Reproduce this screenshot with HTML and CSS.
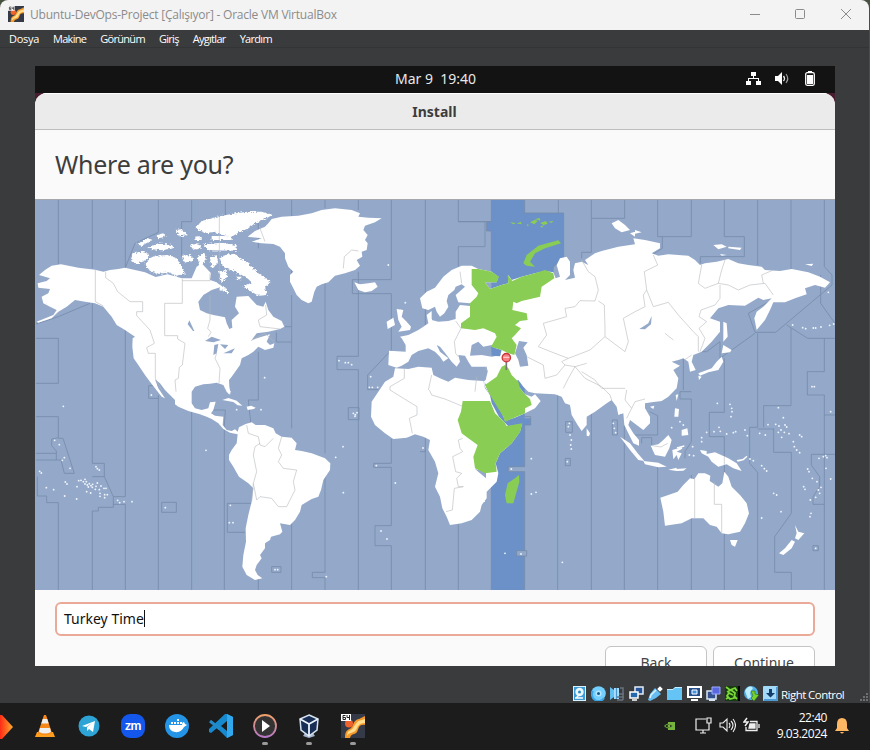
FILE: index.html
```html
<!DOCTYPE html>
<html lang="tr">
<head>
<meta charset="utf-8">
<title>Ubuntu-DevOps-Project</title>
<link rel="stylesheet" href="styles.css">
</head>
<body>
<svg width="0" height="0" class="defs" aria-hidden="true">
  <defs>
    <symbol id="vm" viewBox="0 0 24 24"><path fill="#343a47" d="M0 0h24v24H0z"/><path fill="#f59a2a" d="M4 24c0-8 3-8 6-10 3-3 2-8 8-9l6-3v9c-7-1-6 4-8 7-2 3-6 1-7 6z"/><path fill="#ffdc8e" d="M6 22c0-6 4-5 6-8 3-4 3-7 9-8l3-1v4c-7 0-7 4-9 7-2 3-7 2-9 6z"/><circle cx="8" cy="9.500" r="4" fill="#f0642b"/><path fill="#fff" d="M0 0h10v7H0z"/><path d="M4.500 1.500H2v4h2.500v-2H2M6 1v2.500h2.500M8.500 1v5" stroke="#222" fill="none"/></symbol>
  </defs>
</svg>
<div class="window">
  <header class="titlebar">
    <svg class="app-icon"><use href="#vm"/></svg>
    <span class="title">Ubuntu-DevOps-Project [Çalışıyor] - Oracle VM VirtualBox</span>
    <svg class="controls" viewBox="0 0 104 12" fill="none" stroke="#8b8b8b"><path d="M0 6.500h10"/><rect x="45.500" y="1.500" width="9" height="9" rx="1"/><path d="M91 1l10 10M101 1L91 11"/></svg>
  </header>
  <nav class="menubar"><span>Dosya</span><span>Makine</span><span>Görünüm</span><span>Giriş</span><span>Aygıtlar</span><span>Yardım</span></nav>
  <main class="screen">
    <div class="topbar">
      <span class="clock">Mar 9&nbsp; 19:40</span>
      <svg class="sys" viewBox="0 0 72 16" fill="#fff">
        <path d="M5 1h5v4H5zM0 10h5v4H0zM10 10h5v4h-5zM7 5h1v2h5v3h-1V8H3v2H2V7h5z"/>
        <path d="M29 5h3l4-4v13l-4-4h-3z"/><path d="M37.500 5q2 2.500 0 5" fill="none" stroke="#eee" stroke-width="1.300"/><path d="M40 3q3.500 4.500 0 9" fill="none" stroke="#999" stroke-width="1.200"/>
        <path d="M62 0h4v1h-4z"/><rect x="59.700" y="1.700" width="8.600" height="12.600" rx="1.500" fill="none" stroke="#fff" stroke-width="1.300"/><path d="M61 4h6v9h-6z"/>
      </svg>
    </div>
    <div class="backdrop"><section class="installer">
      <div class="install-head"><span>Install</span></div>
      <h1><span>Where are you?</span></h1>
      <svg class="map" viewBox="0 12 2400 1173">
        <defs><filter id="coast" x="0" y="0" width="100%" height="100%"><feTurbulence type="fractalNoise" baseFrequency=".13" numOctaves="2" seed="4"/><feDisplacementMap in="SourceGraphic" scale="4" xChannelSelector="R" yChannelSelector="G"/></filter>
        <filter id="fjord" x="0" y="0" width="100%" height="100%"><feTurbulence type="fractalNoise" baseFrequency=".12 .25" numOctaves="2" seed="9"/><feDisplacementMap in="SourceGraphic" scale="13" xChannelSelector="R" yChannelSelector="G"/></filter></defs>
        <path class="sea" d="M0 12h2400v1173H0z"/>
        <path class="band" d="M1369 12h100v42h117v136l-30 25v40l-87 90v325h18v20h-18v125h-49v15h49v237h-24v16h24v102h-100V108h-14V80h14z"/>
        <g class="zones">
          <path d="M70 12V208M0 430H70V565H0M0 665H70V728L50 732V752L64 768V775H0M64 775V795H0M64 795H78L88 835H118L84 730H70M7 845V903H35V923H70V1185"/>
          <path d="M172 12V220M172 325V805H208V845L235 905V937H190V948H172V1185M172 845H208M235 905H271V12M235 928H271V1185M271 218L300 145L370 112V12M0 388L70 365L165 325"/>
          <path d="M370 610H341V572H370M370 600V1185M380 922H424V952H380zM470 12V80H440V185M470 630V1185M571 12V85M528 645H571L568 690V1185M577 925H650M577 925V1012H630M670 60V160M670 470V615H640L648 690M670 1150V1185"/>
          <path d="M770 12V65M770 150V265M770 300V700M770 395H750M724 412V441H770M770 985V1185M870 12V40M870 262V775M870 830V1132H832V1148H870V1185M970 12V45M970 230V484H906V524H970V1185M1069 12V254H952V296H1069V465L998 540V584H1030M1069 732V805H1016V817H1069V992H1020V1052H1069V1185M1171 12V390M1171 725V770H1155M1171 765V1185M1270 12V80H1369M1270 80L1350 80V155H1270V215M1270 988V1185M1369 12V80H1355V108H1369V230M1369 850V1185M1469 12V54H1586V190L1550 220M1570 12V54M1669 12V70H1769V12M1669 70V172H1640V190"/>
          <path d="M1469 665H1487V690H1469V815H1420V830H1469V1067H1445V1083H1475V1067H1469M1469 1083V1185M1568 598V1185M1669 650V1185M1768 690V1185M1868 12V125H1969V12M1882 125V160L1850 180M1844 650L1868 662V720H1800M1820 745V728H1850V760M1868 815V1185M1969 590H1935V612H1969V740L1950 770V790M1969 840V1185M1996 205V185H2128V125H2068V12M2168 12V210M2268 12V222M2368 12V215L2391 240V270L2222 412H2160L2140 355L2220 310"/>
          <path d="M1945 490V585M1970 470H2015L2055 440V490L2160 415M2068 490V652H2023V725H2068V1185M2168 415V697H2144V805L2168 832V1185M2255 390L2318 430H2400M2368 430V530H2317V600H2368V660H2400M2268 400V632H2186V697M2216 700V772H2269V955L2219 1025V1132H2269V1185M2168 702H2216M2357 240V325L2400 385M2368 660V1185M2329 778H2400M2329 778V810L2354 845V875L2334 905V928H2368M1732 675H1747V720H1732zM2334 1052H2350V1067H2334zM1592 680H1612V712H1592zM1591 790H1606V812H1591zM940 638H972V674H940zM710 1115H738V1132H710z"/>
        </g>
        <g class="land" filter="url(#coast)">
          <path d="M12 240L30 225 50 212 78 208 130 218 180 224 205 230 225 225 250 222 270 218 300 225 330 232 362 246 398 238 440 250 470 250 485 215 500 205 528 235 525 255 545 262 560 275 530 285 505 300 490 320 495 345 515 355 535 360 570 367 575 385 583 402 592 398 590 375 612 355 600 335 605 305 640 303 665 330 685 335 692 320 700 345 715 365 740 378 748 395 735 402 700 410 665 415 650 435 680 425 705 418 695 440 705 450 718 445 715 458 690 465 670 455 655 470 640 480 620 490 615 510 590 545 582 555 583 575 586 590 582 598 575 590 565 570 545 563 525 566 505 568 480 575 470 590 470 625 480 640 500 645 520 640 525 622 542 620 535 645 528 655 540 662 565 665 563 690 575 705 590 708 600 703 608 710 612 697 632 687 650 682 662 690 690 690 715 700 722 715 740 725 770 728 785 745 780 765 800 768 830 775 870 790 886 805 885 825 865 855 858 885 850 905 830 912 800 930 795 950 780 975 765 990 735 985 742 1010 735 1018 708 1025 705 1035 690 1045 690 1060 675 1080 680 1090 665 1110 660 1125 668 1140 682 1150 660 1155 635 1140 622 1115 625 1080 633 1040 632 1000 640 960 650 920 655 880 640 865 612 845 595 815 582 795 582 780 590 765 605 745 608 718 585 713 565 702 550 685 530 672 515 665 495 658 460 648 430 635 420 628 420 615 405 600 390 585 375 565 360 553 370 580 390 610 380 605 360 580 345 560 330 540 310 510 296 490 292 455 293 430 300 425 270 405 245 390 230 365 205 335 180 325 150 320 120 315 95 335 70 350 50 370 10 383 5 380 55 360 65 345 45 335 25 325 20 305 40 295 45 282 10 278 8 265 35 258 45 250z"/>
          <path d="M638 125L660 108 690 95 700 85 710 72 740 65 790 62 830 55 860 45 900 40 950 45 975 55 970 65 1000 68 1040 70 1020 82 990 92 985 105 998 120 990 135 998 145 995 165 980 170 982 185 965 195 975 212 960 225 930 235 900 242 880 262 860 268 845 275 838 290 830 320 820 325 800 315 785 300 775 280 765 260 765 240 775 230 760 215 750 190 750 175 735 155 715 147 680 145 650 140 680 130zM958 262L975 268 1000 265 1020 262 1028 275 1010 288 990 292 970 285zM1085 342L1105 345 1100 365 1115 380 1128 395 1125 405 1090 410 1100 395 1090 375zM1055 380L1075 368 1080 390 1058 402z"/>
          <path d="M1062 467L1112 470 1112 450 1100 430 1095 425 1120 420 1150 405 1165 395 1180 385 1175 360 1190 348 1190 375 1210 380 1240 378 1262 372 1262 350 1275 330 1305 333 1305 325 1270 322 1262 300 1290 275 1280 268 1262 275 1258 285 1240 300 1235 318 1240 335 1228 355 1215 365 1205 350 1200 335 1180 345 1162 340 1155 310 1175 290 1200 278 1225 245 1250 225 1280 212 1310 212 1330 222 1370 230 1390 245 1385 262 1350 262 1365 282 1400 270 1420 265 1420 240 1430 255 1460 245 1500 235 1530 228 1555 232 1562 250 1575 245 1565 210 1575 190 1595 185 1605 200 1605 240 1590 255 1620 248 1615 225 1620 205 1640 200 1660 210 1650 195 1680 175 1700 168 1750 155 1800 148 1795 130 1830 135 1875 145 1875 160 1850 175 1870 182 1900 178 1960 182 1980 195 1995 210 2010 205 2045 200 2080 192 2110 205 2140 210 2180 215 2190 225 2235 228 2270 222 2320 232 2355 245 2385 262 2370 278 2340 270 2310 280 2315 298 2280 310 2250 322 2215 322 2205 345 2190 375 2165 405 2158 370 2165 350 2185 335 2210 310 2185 315 2170 308 2130 332 2080 330 2050 340 2025 370 2055 380 2055 410 2030 440 2000 470 1975 480 1970 500 1982 525 1965 530 1960 500 1945 490 1930 495 1910 500 1935 512 1915 525 1930 550 1925 580 1900 605 1880 618 1850 622 1830 625 1830 640 1845 665 1845 685 1825 705 1805 690 1785 675 1780 690 1795 715 1812 735 1812 752 1795 745 1780 715 1768 690 1765 655 1750 660 1745 635 1730 615 1715 625 1680 650 1655 665 1655 690 1640 708 1628 690 1610 660 1605 630 1590 625 1580 605 1560 598 1500 595 1480 590 1465 575 1450 555 1440 560 1455 580 1470 598 1490 605 1500 598 1517 618 1500 640 1470 655 1440 668 1410 680 1405 665 1390 640 1365 600 1350 575 1345 560 1352 555 1358 530 1355 515 1330 515 1310 515 1300 500 1290 482 1270 480 1275 500 1265 515 1250 500 1235 480 1215 455 1205 450 1215 470 1240 490 1225 500 1215 485 1200 470 1180 460 1150 468 1130 480 1120 500 1100 512 1085 518 1060 510z"/>
          <path d="M1080 520L1120 522 1150 515 1190 518 1195 540 1215 550 1240 560 1260 548 1300 555 1345 558 1350 580 1365 600 1375 625 1395 665 1410 682 1420 690 1462 682 1455 710 1430 745 1395 775 1382 805 1390 835 1385 860 1355 890 1355 910 1340 930 1335 950 1310 975 1280 985 1245 990 1235 965 1222 940 1215 905 1200 875 1210 835 1200 800 1180 765 1185 735 1165 725 1140 718 1115 728 1075 732 1050 715 1020 690 1008 665 1010 620 1030 590 1050 560 1075 545z"/>
          <path d="M1876 908L1900 900 1928 890 1945 870 1965 850 1978 853 1990 835 2010 835 2026 842 2024 858 2050 875 2062 865 2068 830 2080 845 2090 875 2115 900 2135 925 2142 955 2130 985 2115 1010 2080 1018 2060 1015 2045 995 2025 990 2005 970 1970 970 1940 985 1890 992 1885 950zM2085 1035L2108 1035 2100 1055 2090 1050zM1995 765L2015 768 2015 777 2040 772 2080 790 2105 805 2120 828 2095 820 2075 808 2050 815 2030 800 2020 785 2000 775zM1847 752L1870 748 1885 735 1900 720 1910 735 1903 760 1890 785 1860 780zM1755 725L1785 745 1808 775 1828 798 1810 795 1785 765zM1825 798L1870 803 1895 815 1870 817 1830 808zM1912 765L1940 757 1942 761 1925 770 1940 775 1930 795 1925 780 1915 793zM1920 640L1932 642 1930 665 1918 665zM1940 705L1957 700 1960 720 1940 722zM1922 600L1930 598 1925 618zM1845 635L1858 632 1855 642zM1655 700L1665 715 1662 724 1655 722zM2280 990L2290 1010 2308 1015 2290 1035 2280 1030 2285 1015zM2270 1035L2280 1040 2270 1060 2245 1080 2232 1075 2250 1060zM2065 380L2075 385 2078 425 2065 440zM2065 450L2090 465 2085 472 2060 475zM2060 485L2065 500 2050 525 2020 532 1995 542 1990 535 2030 520 2045 500zM1990 542L2000 545 1992 555z"/>
          <path d="M1730 85L1750 75 1770 90 1785 105 1760 112 1740 100zM1785 115L1800 110 1800 125zM1800 105L1820 112 1800 116zM2035 150L2060 148 2075 155 2050 163zM2080 155L2120 158 2115 165 2080 160zM2055 177L2075 180 2060 182zM2310 208L2335 206 2330 213zM562 615L580 609 605 617 622 632 608 631 595 621zM635 635L648 632 662 638 656 642 638 645zM577 585L587 588 585 600zM1900 824L1925 818 1925 822 1955 820 1945 827 1925 828zM1925 757L1948 751 1948 755 1928 761zM2105 795l18-3 12-10 2 3-11 11-18 4z"/>
        </g>
        <g class="land" filter="url(#fjord)">
          <path d="M482 98L500 78 540 67 600 55 640 50 680 50 712 60 690 72 660 85 640 100 610 113 590 125 560 120 540 110 515 115 490 105zM292 175L320 170 345 178 335 195 305 208 288 198zM340 192L360 182 400 180 425 190 440 215 450 235 425 242 400 232 370 237 345 228 332 210zM340 158L370 145 410 150 418 160 380 166 345 162zM305 148L340 130 352 135 320 152zM365 120L385 115 392 125 370 130zM420 105L440 103 458 120 435 124zM505 148L560 143 605 150 605 167 520 166zM465 150L490 145 500 160 475 164zM487 185L510 175 512 195 495 218zM440 182L470 180 475 197 450 203zM525 190L545 180 550 205 530 218zM555 190L575 178 600 178 640 205 670 235 708 262 690 275 695 300 670 302 650 290 625 275 640 268 650 262 635 248 620 240 600 228 575 222 560 210zM550 268L575 280 580 295 555 285zM550 230L575 225 577 245 560 262zM605 245h14v8h-14zM480 125L500 123 500 135 482 135zM530 122L590 124 590 135 530 135z"/>
        </g>
        <path class="fill-sea" filter="url(#coast)" d="M1310 450L1330 440 1345 455 1370 450 1385 465 1398 480 1370 485 1340 480 1305 482zM1452 438L1478 442 1465 458 1475 480 1480 512 1455 515 1450 495 1440 475zM510 438L530 425 558 435 535 442zM538 450L550 447 545 475 535 480zM555 448L580 450 570 462zM565 475L600 460 590 475zM463 376L478 408 474 408 458 388zM1813 402L1840 385 1850 363 1848 388 1830 403zM1320 822L1353 830 1353 850z"/>
        <path class="band" d="M1368 455L1400 465 1395 484 1370 482zM1347 560L1365 585 1395 640 1410 678 1468 660 1464 686 1420 694 1392 665 1370 625 1365 600z"/>
        <g class="green" filter="url(#coast)">
          <path d="M1310 222L1330 222 1370 230 1392 245 1385 262 1350 262 1365 282 1400 270 1420 265 1418 240 1432 258 1460 245 1500 235 1530 225 1555 235 1558 250 1520 275 1515 305 1460 318 1445 325 1435 320 1432 345 1475 355 1478 375 1455 378 1440 390 1458 400 1440 420 1430 430 1445 450 1438 480 1420 475 1400 465 1368 455 1385 425 1380 415 1345 400 1320 405 1278 400 1278 385 1305 365 1305 325 1325 305 1330 295 1310 270zM1465 205L1475 180 1510 152 1570 136 1578 145 1530 160 1500 175 1485 200 1500 215 1475 212zM1410 510L1420 520 1430 540 1450 560 1455 580 1470 598 1485 612 1490 630 1470 640 1470 655 1410 680 1405 665 1365 600 1350 570 1385 545 1400 515zM1283 618L1365 618 1380 655 1408 682 1415 693 1462 685 1455 712 1430 745 1395 775 1382 805 1385 830 1350 835 1320 820 1315 785 1328 750 1300 730 1280 715 1268 675 1278 650zM1452 840L1453 860 1435 925 1415 925 1410 900 1418 865 1440 850z"/>
          <path d="M1425 82l18 2-8 4zM1445 86l12-6 3 7zM1485 82l15-8 8 4-10 10zM1500 72l14-3 2 8zM1515 84l18-6 5 8-12 4zM1540 80l15-2-5 6zM1475 88l7 2-5 4zM1516 94l12-3-8 7z"/>
        </g>
        <g class="borders">
          <path d="M181 224V320L205 333M212 230V248L235 265 248 290 285 320H323V350H305V362L345 405 358 445 335 458 340 475H361V550L380 585M442 252V325H389V422H428V432L450 445 442 510 433 517 430 550 420 555 423 590M525 235V257H442M525 300L525 375 518 400 528 412 520 425M545 475L540 490 555 520 552 565M553 60V262M692 330L695 360 670 375 675 395 735 402M648 437L690 415 718 440M925 220L928 185 950 165 970 168M672 92L690 140"/>
          <path d="M635 690L640 715 670 725 675 750 690 755 715 730M740 725L730 760 740 780 730 800 745 820 785 825 775 860 780 885 755 935 730 935 710 910 675 905 665 915 655 865 665 830 655 780 660 755 675 745M655 865L650 920"/>
          <path d="M1065 585L1146 635V660L1123 670 1132 715M1183 585L1190 600 1230 612 1283 634M1283 730L1270 735 1275 760 1283 770 1253 785 1262 830 1280 835 1265 850 1270 875 1285 875 1258 880 1252 945 1233 950M1108 520L1108 550 1065 575 1065 585M1190 540L1180 585M1275 230L1280 265M1262 378L1278 400 1258 440 1262 475 1270 485M1350 515L1358 530M1475 485L1525 510 1530 550 1565 540 1590 510 1620 515 1600 550 1585 580M1640 530L1680 555 1700 580 1770 580M1325 545L1320 590"/>
          <path d="M1640 195L1660 230 1680 245 1690 285 1680 318 1635 317 1620 335 1590 340 1595 365 1525 385 1535 420 1510 455 1560 475 1600 490 1665 465 1710 425 1770 470 1780 440 1765 370 1800 350 1830 335 1825 300 1835 285 1828 230 1868 210 1855 180M1690 318L1708 330 1710 400 1710 425M1835 285L1855 335 1900 322 1930 360 1975 410 1990 425 1990 470M1890 415L1915 435M2000 210L1990 265 2010 280 2050 265 2060 225 2070 195M2050 265L2080 270 2110 285 2145 270 2190 265 2215 300M2215 225L2180 240 2185 265M2055 270L2055 310 2040 330 1998 345 1992 365 2015 380 1992 400 2010 430 1995 470M1600 490L1580 500 1590 510M1655 505L1620 515 1650 550 1700 575 1725 600 1730 615M1775 585L1770 615 1790 640 1775 670M1790 640L1800 620 1830 612M1948 495L1970 480M1979 850V970M2038 862V928H2060V1015M2068 785V810M1852 752L1878 756 1898 745"/>
        </g>
        <path class="dots" d="M85 634h0M59 736h0M73 749h0M88 788h0M82 796h0M105 820h0M14 829h0M19 834h0M34 878h0M56 884h0M91 861h0M96 867h0M89 903h0M125 912h0M126 875h0M131 857h0M138 856h0M145 860h0M150 853h0M154 860h0M150 867h0M157 870h0M163 866h0M168 872h0M173 868h0M160 876h0M172 877h0M183 874h0M187 864h0M198 873h0M207 880h0M213 880h0M193 884h0M181 883h0M155 890h0M167 894h0M195 895h0M195 904h0M209 899h0M217 899h0M209 908h0M183 815h0M187 821h0M193 825h0M248 916h0M254 923h0M267 920h0M291 920h0M391 938h0M349 600h0M513 766h0M586 931h0M583 983h0M594 983h0M605 644h0M678 644h0M720 1124h0M728 1124h0M874 1145h0M912 497h0M931 503h0M940 503h0M950 509h0M689 548h0M1007 545h0M1003 577h0M1012 577h0M1028 577h0M1111 323h0M1060 210h0M902 787h0M924 755h0M925 893h0M955 655h0M961 659h0M966 653h0M960 664h0M1024 812h0M1081 864h0M1164 759h0M1038 1008h0M1056 1032h0M1429 822h0M1489 791h0M1489 897h0M1503 892h0M1458 1077h0M1582 1102h0M1603 685h0M1600 695h0M1605 720h0M1609 735h0M1607 750h0M1609 762h0M1597 800h0"/>
        <path class="dots" d="M2047 625h0M2085 628h0M2090 640h0M2091 650h0M2088 665h0M2230 638h0M2199 689h0M2245 668h0M2222 688h0M2232 693h0M2250 690h0M2255 696h0M2238 705h0M2230 712h0M2248 712h0M2262 716h0M2240 727h0M2294 720h0M2300 725h0M2037 710h0M2052 697h0M2056 709h0M2015 712h0M2000 728h0M2000 740h0M2075 717h0M2095 713h0M2102 710h0M2130 705h0M2137 722h0M2174 715h0M2191 720h0M1973 755h0M1963 780h0M1976 782h0M2275 740h0M2278 755h0M2285 765h0M2294 773h0M2352 790h0M2365 785h0M2372 782h0M2376 788h0M2318 822h0M2322 830h0M2373 820h0M2387 852h0M2332 850h0M2306 875h0M2310 883h0M2346 860h0M2358 877h0M2350 885h0M2354 895h0M2342 907h0M2326 915h0M2387 650h0M2328 955h0M2325 965h0M2342 1060h0M2238 950h0M2180 969h0M2216 895h0M2225 900h0M2188 821h0M2195 828h0M2180 812h0M2155 797h0M2145 792h0M1735 685h0M1738 700h0M1742 713h0M1800 775h0M1935 680h0M1945 690h0M1910 698h0M2273 390h0M2303 398h0M2312 401h0M2335 399h0M2342 399h0M2358 396h0M2384 391h0M2396 387h0M2380 292h0M2331 575h0M2338 575h0M1410 1075h0"/>
        <path d="M1414 495v30" stroke="#777" stroke-width="5"/><circle cx="1414" cy="488" r="12.500" fill="#f77d80" stroke="#c9343a" stroke-width="4"/><path d="M1405 487h18" stroke="#fcc" stroke-width="4"/>
        <path d="M1.500 1185V13.500H2400" fill="none" stroke="#a4a7ac" stroke-width="3"/>
      </svg>
      <div class="form"><div class="field"><span>Turkey Time</span><i></i></div>
      <div class="buttons"><div><span>Back</span></div><div><span>Continue</span></div></div></div>
    </section></div>
  </main>
  <footer class="statusbar">
    <svg viewBox="0 0 15 15"><path fill="#d9f1ff" d="M1 0h13v15H1z"/><path fill="#3d9bd8" d="M2 1h11v13H2z"/><circle cx="7.500" cy="6" r="4.200" fill="#e9f8ff"/><circle cx="7.500" cy="6" r="1.500" fill="#3087be"/><path d="M4 12l4-4M3 12h8" stroke="#fff" stroke-width="1.300"/></svg>
    <svg viewBox="0 0 15 15"><circle cx="7.500" cy="7.500" r="7.300" fill="#73cfff"/><path d="M2 5a6 6 0 0 0 11 7" stroke="#3da6e4" stroke-width="2" fill="none"/><circle cx="7.500" cy="7.500" r="3" fill="#b4e6ff"/><circle cx="7.500" cy="7.500" r="1.500" fill="#165b91"/></svg>
    <svg viewBox="0 0 15 15"><path fill="#64bff2" d="M0 1l4 3v7l-4 3z"/><path fill="#a9ddff" d="M4 2h5v11H4z"/><path d="M6.500 2v11" stroke="#4a94c9" stroke-width="1.200"/><path d="M10 2h3v12M9 8h5M7 11h7M7 14h6" stroke="#68727d" stroke-width="1.500" fill="none"/></svg>
    <svg viewBox="0 0 15 15"><path d="M6 1h8v7H6z" fill="#24549b" stroke="#e2edf7" stroke-width="1.500"/><path d="M1 6h8v6H1zM3 14h5" fill="#2668ad" stroke="#fff" stroke-width="1.500"/></svg>
    <svg viewBox="0 0 15 15"><path d="M9 3l3-3 3 3-3 3z" fill="#fff" stroke="#777"/><path d="M7 2l6 6-5 4-6 3-2-1 2-6z" fill="#65bdf2"/><path d="M8 4L3 9l-1 3" stroke="#d8f4ff" stroke-width="1.500" fill="none"/></svg>
    <svg viewBox="0 0 15 15"><path d="M0 3h6l2-2h7v13H0z" fill="#65c4f6"/><path d="M0 3.500h6l2-2h7" stroke="#c5edff" fill="none"/></svg>
    <svg viewBox="0 0 15 15"><path d="M1 1h13v10H1z" fill="#244e8d" stroke="#fff" stroke-width="2"/><path d="M5 4h5v4H5z" fill="#4594df" stroke="#fff"/><path d="M4 14h7" stroke="#fff" stroke-width="2"/></svg>
    <svg viewBox="0 0 15 15"><path d="M1 5h9v8H1zM3 14.500h6" fill="#36528e" stroke="#d7e6f4" stroke-width="1.500"/><path d="M6 1h8v7H6z" fill="#5968df" stroke="#9cabff"/></svg>
    <svg viewBox="0 0 15 15"><path fill="#153b0e" d="M0 0h13v15H0z"/><path d="M1 1l4 3 5-2 2 3M2 6l4-2 4 3-1 5-4 1-3-3 2-3 4 2M1 13l3-2M9 10l3 3" stroke="#7bd83a" stroke-width="1.800" fill="none"/><path d="M14 0v15" stroke="#050505" stroke-width="2"/></svg>
    <svg viewBox="0 0 15 15"><circle cx="7" cy="7" r="7" fill="#53aee7"/><path d="M1 5q4-7 8-3l-3 5 1 4-3 2z" fill="#bcefff"/><path d="M7 5l4 0 0 3 4 1-5 6-3-3 2-2z" fill="#7ad22f" stroke="#257112" stroke-width=".6"/></svg>
    <svg viewBox="0 0 15 15"><rect width="15" height="15" rx="1" fill="#a2daf8"/><path d="M1 14h13V1" stroke="#4c9bd4" stroke-width="2" fill="none"/><path fill="#143e6a" d="M6 3h3v4h3l-4.500 4.500L3 7h3z"/></svg>
    <span>Right Control</span>
    <svg class="grip" viewBox="0 0 9 9"><path d="M1 8h0M4 8h0M7 8h0M4 5h0M7 5h0M7 2h0" stroke="#999" stroke-width="1.500" stroke-linecap="square"/></svg>
  </footer>
</div>
<div class="taskbar">
  <svg class="edge" viewBox="0 0 13 24"><defs><linearGradient id="hot"><stop stop-color="#ff2a16"/><stop offset="1" stop-color="#ffac2c"/></linearGradient></defs><path fill="url(#hot)" d="M0 0h2l11 12L2 24H0z"/></svg>
  <div class="apps">
    <svg viewBox="0 0 24 24"><path d="M4 18h16l2 5H2z" fill="#ff9d1c"/><path d="M11 1h2l6 18q-7 4-14 0z" fill="#f58719"/><path d="M9.700 5h4.600l1.400 4.500H8.300zM7 14h10l1 4q-6 3-12 0z" fill="#eee"/></svg>
    <svg viewBox="0 0 24 24"><circle cx="12" cy="12" r="10.500" fill="#2da4d5"/><path fill="#fff" d="M5 12L18 7l-2 11-4-3-2 2v-4l5-4-6 4z"/></svg>
    <svg viewBox="0 0 24 24"><rect width="24" height="24" rx="9" fill="#1457ed"/><text x="12" y="16" text-anchor="middle" class="zm">zm</text></svg>
    <svg viewBox="0 0 24 24"><circle cx="12" cy="12" r="12" fill="#2494e7"/><path fill="#fff" d="M4 11h13q0-3 2-3l1 2 2 1-3 2q-3 6-9 5-6-1-6-7zM6 8h2v2H6zM9 8h2v2H9zM12 8h2v2h-2zM12 5h2v2h-2zM15 8h2v2h-2z"/></svg>
    <svg viewBox="0 0 24 24"><path fill="#1689cf" d="M18 0l6 3v18l-6 3L8 14l-6 5-2-1v-3l16-15zM18 7l-6 5 6 5z" fill-rule="evenodd"/><path fill="#32a9ef" d="M18 0l6 3v18l-6 3z"/><path stroke="#2489c7" stroke-width="3" d="M1 7l10 8"/></svg>
    <svg viewBox="0 0 24 34"><defs><linearGradient id="ring" x2="0" y2="1"><stop stop-color="#f0a06c"/><stop offset="1" stop-color="#b678c5"/></linearGradient></defs><circle cx="12" cy="12" r="11" fill="#333" stroke="url(#ring)" stroke-width="1.800"/><path fill="#fff" d="M9 6l8 6-8 6z"/><rect class="running" x="9" y="28" width="6" height="3" rx="1.500"/></svg>
    <svg viewBox="0 0 24 34"><path d="M8 19h8l2 3-6 2-6-2z" fill="#a7b4ce"/><path fill="#182e55" stroke="#d5e3f1" stroke-width="1.500" d="M12 1l9 4-1 11-8 6-8-6L3 5z"/><path d="M3 5l9 5 9-5M12 10v12" fill="none" stroke="#e9f2fa" stroke-width="1.800"/><rect class="running" x="9" y="28" width="6" height="3" rx="1.500"/></svg>
    <svg viewBox="0 0 24 34"><use href="#vm" width="24" height="24"/><rect class="running" x="9" y="28" width="6" height="3" rx="1.500"/></svg>
  </div>
  <div class="tray">
    <svg class="nv" viewBox="0 0 11 8"><path fill="#76b43d" d="M4 0h7v8H4z"/><path d="M.5 4q4-4 8.500 0-4.500 4-8.500 0z" fill="#1f3014" stroke="#79b541"/><circle cx="5" cy="4" r="1.300" fill="#79b541"/></svg>
    <svg viewBox="0 0 17 17" fill="none" stroke="#eee" stroke-width="1.200"><path d="M11 2H1v11h13V9M5 16h6M8 13v3M12 1h4v5h-4zM14 6v3"/></svg>
    <svg viewBox="0 0 17 17" fill="none" stroke="#eee" stroke-width="1.100"><path d="M1 6h3l4-4v12l-4-4H1zM10 6q2 2 0 5M12 4q4 4 0 9M14 2q5 6 0 13"/></svg>
    <svg viewBox="0 0 17 17" fill="none" stroke="#eee" stroke-width="1.300"><path d="M7 4.500h7v9H3V10M16 7v4"/><path d="M7 7h5v4H6z" fill="#eee"/><path d="M4 1L1 5h4L2 9" stroke-width="1.500"/></svg>
    <div class="date"><span>22:40</span><span>9.03.2024</span></div>
    <svg class="bell" viewBox="0 0 14 16"><path fill="#ffb764" d="M7 0q5 0 5 6v4l2 3H0l2-3V6q0-6 5-6zM5 14h4q-2 3-4 0z"/></svg>
  </div>
</div>
</body>
</html>
```
FILE: styles.css
```css
* { box-sizing: border-box; }
body { margin: 0; width: 870px; height: 750px; overflow: hidden; background: #46523f; font-family: "Open Sans", "Noto Sans", sans-serif; display: flex; flex-direction: column; }
.defs { position: absolute; }
svg { display: block; flex: none; }
.window { width: 869px; height: 703px; background: #3a3b3c; border-radius: 8px 8px 0 0; overflow: hidden; display: flex; flex-direction: column; }
.titlebar { height: 30px; flex: none; background: #f3f3f3; display: flex; align-items: center; padding: 0 17px 0 8px; }
.app-icon { width: 16px; height: 16px; margin-top: -2px; }
.title { font-size: 12px; color: #8b8b8b; margin: -2px 0 0 6px; letter-spacing: -.23px; white-space: nowrap; }
.controls { width: 104px; height: 12px; margin: -2px -2px 0 auto; }
.menubar { height: 18px; flex: none; border-bottom: 1px solid #333435; color: #fff; font-size: 11px; display: flex; align-items: center; gap: 14px; padding-left: 9px; letter-spacing: -.7px; }
.menubar span:first-child { letter-spacing: -.3px; }
.screen { width: 800px; height: 600px; margin: 18px 0 0 35px; flex: none; overflow: hidden; background: #fafafa; }
.topbar { height: 27px; background: #131313; color: #e8e8e8; display: flex; align-items: center; justify-content: flex-end; padding-right: 17px; }
.clock { font: 14px "Noto Sans", sans-serif; margin: -2px 270px 0 0; white-space: nowrap; }
.sys { width: 72px; height: 16px; margin-top: -1px; }
.backdrop { background: #4a1c2f; }
.installer { background: #fafafa; border-radius: 12px 12px 0 0; overflow: hidden; }
.install-head { height: 37px; background: #ebebeb; border-top: 1px solid #fff; border-bottom: 1px solid #bdbdbd; display: flex; align-items: center; justify-content: center; color: #3d3d3d; font: bold 14px "Noto Sans", sans-serif; }
.install-head span { margin-right: 1px; }
h1 { margin: 0; height: 69px; padding: 0 20px 1px; display: flex; align-items: center; font: 25px "Noto Sans", sans-serif; color: #3d3d3d; letter-spacing: -.25px; }
.map { width: 800px; height: 391px; }
.sea, .fill-sea { fill: #94a9ca; }
.band { fill: #6c91c8; }
.zones { fill: none; stroke: #768ba9; stroke-width: 2.500; }
.land { fill: #fff; }
.green { fill: #8acd54; }
.borders { fill: none; stroke: #b6b9bc; stroke-width: 1.800; }
.dots { fill: none; stroke: #f1f6fc; stroke-width: 5.500; stroke-linecap: round; }
.form { padding: 12px 20px 0; }
.field { height: 34px; border: 2px solid #eaaa97; border-radius: 6px; background: #fff; display: flex; align-items: center; padding: 0 0 2px 7px; font: 14px "Noto Sans", sans-serif; color: #111; }
.field i { width: 1px; height: 17px; background: #111; }
.buttons { display: flex; gap: 6px; justify-content: flex-end; margin-top: 10px; }
.buttons div { width: 102px; height: 34px; border: 1px solid #c4c4c4; border-radius: 6px; background: #fff; color: #444; display: flex; align-items: center; justify-content: center; padding-bottom: 2px; font: 14px "Noto Sans", sans-serif; }
.statusbar { height: 17px; margin: 19px 0 0 572px; flex: none; display: flex; align-items: center; gap: 4.100px; color: #fff; font-size: 11.500px; letter-spacing: -.55px; white-space: nowrap; }
.statusbar svg { width: 15px; height: 15px; }
.statusbar span { margin: 2px 0 0 -1px; }
.statusbar .grip { width: 9px; height: 9px; margin: 6px 0 0 auto; }
.taskbar { height: 47px; background: #1c1c1c; display: flex; align-items: center; }
.edge { width: 13px; height: 24px; }
.apps { display: flex; gap: 20px; margin: -1px 0 0 20px; height: 24px; }
.apps svg { width: 24px; height: 24px; }
.apps svg:nth-child(n+6) { height: 34px; }
.running { fill: #9a9a9a; }
.zm { font: bold 13px Lato, sans-serif; fill: #fff; letter-spacing: -.5px; }
.tray { margin: -2px 21px 0 auto; display: flex; align-items: center; }
.tray svg { width: 17px; height: 17px; margin-right: 7px; }
.tray svg:nth-child(2) { margin-left: 2px; }
.tray .nv { width: 11px; height: 8px; margin-right: 18px; }
.date { width: 60px; display: flex; flex-direction: column; align-items: flex-end; font-size: 12px; line-height: 16px; color: #fff; letter-spacing: -.45px; }
.tray .bell { width: 14px; height: 16px; margin: 0 0 0 8px; }
```
